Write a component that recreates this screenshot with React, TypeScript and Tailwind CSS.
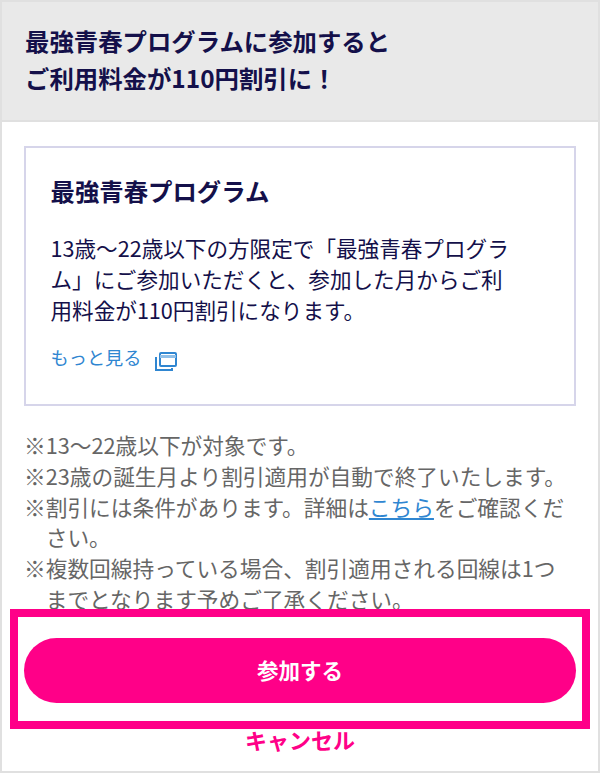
import React from 'react';

const font = { fontFamily: '"Noto Sans CJK JP", "Noto Sans", sans-serif' };

const notes = [
  { text: '13〜22歳以下が対象です。' },
  { text: '23歳の誕生月より割引適用が自動で終了いたします。' },
  { link: true },
  { text: '複数回線持っている場合、割引適用される回線は1つまでとなります予めご了承ください。' },
];

const WindowIcon = () => (
  <svg width="22" height="19" viewBox="0 0 22 19" fill="none" stroke="#2f86d1" strokeWidth="2" className="ml-[14px] mt-[8px]">
    <rect x="5" y="1" width="16" height="13" rx="1" />
    <path d="M5 4.5h16" strokeWidth="3" stroke="#8fbfe8" />
    <path d="M1 5v13h16v-2" />
  </svg>
);

export default function App() {
  return (
    <div style={font} className="w-[600px] h-[773px] overflow-hidden bg-white border-2 border-[#e0e0e0] flex flex-col">
      <div className="h-[120px] shrink-0 bg-[#e9e9e9] border-b-2 border-[#e0e0e0] px-[23px] pt-[21px]">
        <h1 className="text-[24.4px] leading-[36.5px] font-bold text-[#14104a]">
          最強青春プログラムに参加すると
          <br />
          ご利用料金が110円割引に！
        </h1>
      </div>
      <div className="px-[22px] pt-[24px]">
        <div className="h-[260px] border-2 border-[#d6d5ea] pl-[24.5px] pr-[58px] pt-[25px]">
          <h2 className="text-[24.4px] leading-[36px] font-bold text-[#14104a]">最強青春プログラム</h2>
          <p className="mt-[23px] text-[21.6px] leading-[31px] text-[#14104a]">
            13歳〜22歳以下の方限定で「最強青春プログラム」にご参加いただくと、参加した月からご利用料金が110円割引になります。
          </p>
          <a className="mt-[18px] flex items-center text-[18.2px] leading-[28px] text-[#2f86d1]">
            もっと見る
            <WindowIcon />
          </a>
        </div>
        <ul className="mt-[24px] pr-[10px] text-[21.7px] leading-[30.8px] text-[#666666]">
          {notes.map((n, i) => (
            <li key={i} className="flex">
              <span className="shrink-0">※</span>
              {n.link ? (
                <span>
                  割引には条件があります。詳細は<a className="text-[#2f86d1] underline">こちら</a>をご確認ください。
                </span>
              ) : (
                <span>{n.text}</span>
              )}
            </li>
          ))}
        </ul>
      </div>
      <div className="relative flex-1">
        <div className="absolute left-[8px] top-[-6px] w-[580px] h-[120px] border-[8px] border-[#ff0088] bg-white px-[6px] pt-[21px]">
          <button className="w-full h-[65px] rounded-full bg-[#ff0088] text-white text-[21.5px] font-bold">参加する</button>
        </div>
        <div className="absolute left-0 right-0 top-[108px] text-center text-[22px] leading-[32px] font-bold text-[#ff0088]">キャンセル</div>
      </div>
    </div>
  );
}
